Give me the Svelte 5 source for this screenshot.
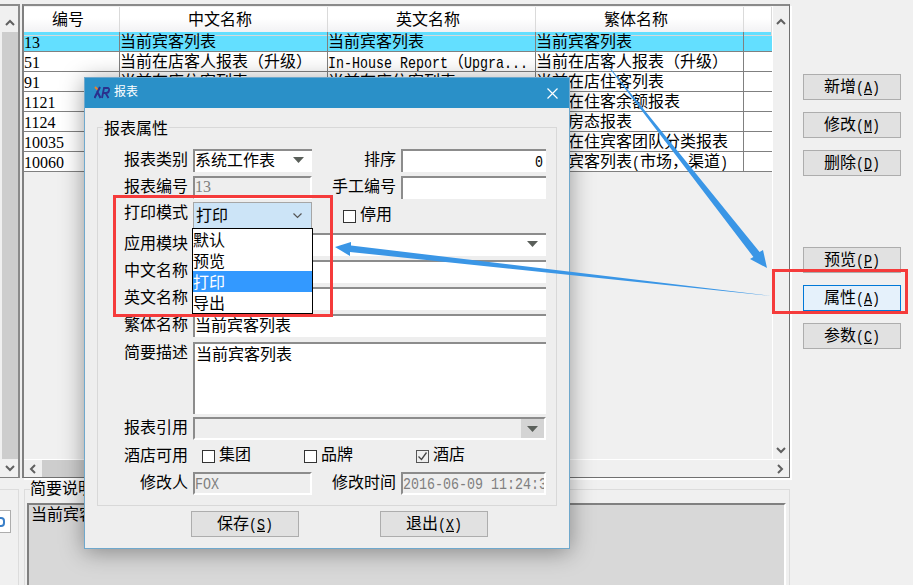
<script>
  const columns = ['编号', '中文名称', '英文名称', '繁体名称', ''];
  const rows = [
    ['13', '当前宾客列表', '当前宾客列表', '当前宾客列表'],
    ['51', '当前在店客人报表（升级）', 'In-House Report（Upgra...', '当前在店客人报表（升级）'],
    ['91', '当前在店住客列表', '当前在店住客列表', '当前在店住客列表'],
    ['1121', '当前在住客余额报表', '当前在住客余额报表', '当前在住客余额报表'],
    ['1124', '当前房态报表', '当前房态报表', '当前房态报表'],
    ['10035', '当前在住宾客团队分类报表', '当前在住宾客团队分类报表', '当前在住宾客团队分类报表'],
    ['10060', '当前宾客列表(市场，渠道)', '当前宾客列表(市场，渠道)', '当前宾客列表(市场，渠道)']
  ];
  const sideTop = [['新增', 'A'], ['修改', 'M'], ['删除', 'D']];
  const sideBottom = [['预览', 'P', false], ['属性', 'A', true], ['参数', 'C', false]];
  const printModes = ['默认', '预览', '打印', '导出'];

  // latin runs are narrower than the CJK size, like SimSun half-width
  const parts = text => text.match(/[\x20-\x7e]+|[^\x20-\x7e]+/g) || [];
  const isLatin = s => /^[\x20-\x7e]/.test(s);
</script>

{#snippet txt(text)}{#each parts(text) as s}{#if isLatin(s)}<span class="en">{s}</span>{:else}{s}{/if}{/each}{/snippet}

{#snippet chevron(d)}
  <svg class="chev" width="10" height="10" viewBox="0 0 10 10"><path {d} fill="none" stroke="#606060" stroke-width="2" /></svg>
{/snippet}

{#snippet tri()}
  <svg class="tri" width="11" height="6" viewBox="0 0 11 6"><path d="M0 0h11L5.500 6z" fill="#5a5f5a" /></svg>
{/snippet}

<div class="app">
  <div class="main">
    <div class="upper">
      <div class="scroll-left">
        <div class="arrow-btn">{@render chevron('M1 7l4-4 4 4')}</div>
        <div class="scroll-thumb"></div>
        <div class="arrow-btn">{@render chevron('M1 3l4 4 4-4')}</div>
      </div>
      <div class="list">
        <div class="list-body">
          <div class="table">
            <div class="head">
              {#each columns as c}<div class="th">{c}</div>{/each}
            </div>
            {#each rows as row, i}
              <div class="tr" class:selected={i === 0}>
                <div class="td num">{@render txt(row[0])}</div>
                <div class="td">{@render txt(row[1])}</div>
                <div class="td">{@render txt(row[2])}</div>
                <div class="td">{@render txt(row[3])}</div>
                <div class="td"></div>
              </div>
            {/each}
          </div>
          <div class="scroll-right">
            <div class="arrow-btn">{@render chevron('M1 7l4-4 4 4')}</div>
            <div class="arrow-btn">{@render chevron('M1 3l4 4 4-4')}</div>
          </div>
        </div>
        <div class="hscroll">
          <div class="arrow-btn side">{@render chevron('M7 1L3 5l4 4')}</div>
          <div class="hthumb"></div>
          <div class="arrow-btn side">{@render chevron('M3 1l4 4-4 4')}</div>
        </div>
      </div>
    </div>

    <div class="lower">
      <div class="lower-left">
        <div class="mini-field"><span class="mini-glyph"></span></div>
      </div>
      <div class="lower-group">
        <span class="legend-low">简要说明</span>
        <div class="memo">当前宾客列表</div>
      </div>
    </div>
  </div>

  <div class="side-buttons">
    <div class="side-group">
      {#each sideTop as b}
        <div class="btn">{b[0]}<span class="en">(<u>{b[1]}</u>)</span></div>
      {/each}
    </div>
    <div class="side-group">
      {#each sideBottom as b}
        <div class="btn" class:focused={b[2]}>{b[0]}<span class="en">(<u>{b[1]}</u>)</span></div>
      {/each}
    </div>
  </div>

  <div class="dialog">
    <div class="titlebar">
      <svg class="logo" width="16" height="14" viewBox="0 0 16 14">
        <path d="M1 1l3 3" stroke="#e8842c" stroke-width="2" fill="none" />
        <path d="M6 1L0.500 12M3 5l3.500 7" stroke="#2b2f8c" stroke-width="2" fill="none" />
        <path d="M8 12l2-10h3.500q2 0 1.500 2.500t-3 2.500H9.500M11.500 7l3 5" stroke="#2b2f8c" stroke-width="1.800" fill="none" />
      </svg>
      <span class="title">报表</span>
      <svg class="close" width="11" height="11" viewBox="0 0 11 11"><path d="M.5.500l10 10M10.500.500l-10 10" stroke="#fff" stroke-width="1.200" /></svg>
    </div>

    <div class="group">
      <span class="legend">报表属性</span>
      <div class="form">
        <div class="lbl">报表类别</div>
        <div class="field select">系统工作表{@render tri()}</div>
        <div class="lbl">排序</div>
        <div class="field right"><span class="en">0</span></div>

        <div class="lbl">报表编号</div>
        <div class="field off"><span class="en serif">13</span></div>
        <div class="lbl">手工编号</div>
        <div class="field"></div>

        <div class="lbl">打印模式</div>
        <div class="print-select">
          打印
          <svg class="print-chev" width="9" height="6" viewBox="0 0 9 6"><path d="M.5.500l4 4 4-4" fill="none" stroke="#555" stroke-width="1.200" /></svg>
          <div class="menu">
            {#each printModes as m, i}
              <div class="menu-item" class:active={i === 2}>{m}</div>
            {/each}
          </div>
        </div>
        <div class="span2 check-line"><span class="box"></span>停用</div>

        <div class="lbl">应用模块</div>
        <div class="field wide select">{@render tri()}</div>

        <div class="lbl">中文名称</div>
        <div class="field wide">当前宾客列表</div>

        <div class="lbl">英文名称</div>
        <div class="field wide">当前宾客列表</div>

        <div class="lbl">繁体名称</div>
        <div class="field wide">当前宾客列表</div>

        <div class="lbl">简要描述</div>
        <div class="field wide memo-field">当前宾客列表</div>

        <div class="lbl">报表引用</div>
        <div class="field wide off ref"><span class="ref-btn">{@render tri()}</span></div>

        <div class="lbl">酒店可用</div>
        <div class="checks">
          <div class="check-line"><span class="box"></span>集团</div>
          <div class="check-line"><span class="box"></span>品牌</div>
          <div class="check-line">
            <span class="box checked">
              <svg width="11" height="11" viewBox="0 0 11 11"><path d="M1.500 5.500l3 3 5-7" fill="none" stroke="#444" stroke-width="1.300" /></svg>
            </span>酒店
          </div>
        </div>

        <div class="lbl">修改人</div>
        <div class="field off"><span class="en">FOX</span></div>
        <div class="lbl">修改时间</div>
        <div class="field off"><span class="en">2016-06-09 11:24:3</span></div>
      </div>
    </div>

    <div class="actions">
      <div class="btn action">保存<span class="en">(<u>S</u>)</span></div>
      <div class="btn action">退出<span class="en">(<u>X</u>)</span></div>
    </div>
  </div>

  <!-- annotations drawn on top of the screenshot -->
  <svg class="marks" width="913" height="585" viewBox="0 0 913 585">
    <polygon points="594,48 759.600,252 763,250 767,268 750,259 753.400,257" fill="#3a96e6" />
    <polygon points="335,247 351,242 351,245.500 772,296 350,252 350,256" fill="#3a96e6" />
    <rect x="114.500" y="196.500" width="217" height="119" fill="none" stroke="#f53b3b" stroke-width="3" />
    <rect x="773.500" y="270.500" width="133" height="42" fill="none" stroke="#f53b3b" stroke-width="3" />
  </svg>
</div>

<style>
  :global(body) {
    background: #f0f0f0;
  }

  .app {
    --cjk: "Liberation Mono", "Noto Sans CJK SC", sans-serif;
    background: #f0f0f0;
    color: #000;
    display: flex;
    font-family: var(--cjk);
    font-size: 16px;
    height: 585px;
    line-height: 19px;
    overflow: hidden;
    position: relative;
    width: 913px;
  }

  .en {
    display: inline-block;
    font-size: 13.33px;
    transform: scaleY(1.2);
  }

  .en.serif,
  .num .en {
    font-family: "Liberation Serif", serif;
    font-size: 16px;
    transform: none;
  }

  .en.serif {
    transform: translateY(-2px);
  }

  .main {
    flex: none;
    padding-top: 4px;
    width: 792px;
  }

  .upper {
    column-gap: 2px;
    display: flex;
    height: 474px;
  }

  .scroll-left {
    border-bottom: 1px solid #808080;
    border-right: 2px solid #8a8a8a;
    border-top: 2px solid #8a8a8a;
    box-sizing: border-box;
    display: flex;
    flex-direction: column;
    padding: 1px 0 0 2px;
    width: 20px;
  }

  .arrow-btn {
    align-items: center;
    background: #f0f0f0;
    display: flex;
    flex: none;
    height: 18px;
    justify-content: center;
    width: 16px;
  }

  .arrow-btn.side {
    height: 100%;
    width: 18px;
  }

  .scroll-left .arrow-btn:first-child {
    margin-top: 7px;
  }

  .scroll-thumb {
    background: #cdcdcd;
    flex: 1;
  }

  .list {
    border-bottom: 1px solid #707070;
    border-left: 2px solid #808080;
    border-right: 1px solid #707070;
    border-top: 2px solid #8a8a8a;
    box-shadow: 2px 2px 0 #fff;
    box-sizing: border-box;
    display: flex;
    flex-direction: column;
    width: 768px;
  }

  .list-body {
    display: flex;
    flex: 1;
    min-height: 0;
    padding-top: 1px;
  }

  .table {
    width: 748px;
  }

  .head,
  .tr {
    display: grid;
    grid-template-columns: 96px 208px 208px 208px 28px;
  }

  .head {
    background: linear-gradient(#fff 0 45%, #f2f2f4);
    height: 25px;
  }

  .th {
    border-bottom: 1px solid #d8d8d8;
    border-right: 1px solid #dadada;
    box-sizing: border-box;
    line-height: 28px;
    padding-right: 7px;
    text-align: center;
  }

  .tr {
    background: #fff;
    height: 20px;
  }

  .tr.selected {
    background: #63dfff;
  }

  .td {
    border-bottom: 1px solid #808080;
    border-right: 1px solid #808080;
    box-sizing: border-box;
    line-height: 23px;
    overflow: hidden;
    white-space: nowrap;
  }

  .td.num {
    line-height: 21px;
  }

  .td:last-child {
    border-right: none;
  }

  .scroll-right {
    border-left: 1px solid #fff;
    display: flex;
    flex: 1;
    flex-direction: column;
    justify-content: space-between;
    margin-top: -1px;
  }

  .scroll-right .arrow-btn:first-child {
    margin-top: 7px;
  }

  .hscroll {
    border-top: 1px solid #fff;
    display: flex;
    flex: none;
    height: 17px;
    justify-content: space-between;
  }

  .hthumb {
    background: #cdcdcd;
    margin-right: auto;
    width: 360px;
  }

  .lower {
    column-gap: 5px;
    display: flex;
    height: 107px;
  }

  .lower-left {
    border-right: 1px solid #dcdcdc;
    border-top: 1px solid #dcdcdc;
    box-sizing: border-box;
    margin-top: 11px;
    padding-top: 20px;
    width: 19px;
  }

  .mini-field {
    align-items: center;
    background: #fff;
    border: 1px solid #adadad;
    border-left: none;
    box-sizing: border-box;
    display: flex;
    height: 23px;
    width: 11px;
  }

  .mini-glyph {
    border: 2px solid #3a7fc8;
    border-left: none;
    border-radius: 0 4px 4px 0;
    height: 6px;
    width: 3px;
  }

  .lower-group {
    border: 1px solid #dcdcdc;
    border-bottom: none;
    box-sizing: border-box;
    flex: 1;
    margin: 11px 2px 0 0;
    padding: 13px 3px 0 2px;
    position: relative;
  }

  .legend-low {
    background: #f0f0f0;
    left: 5px;
    padding-right: 2px;
    position: absolute;
    top: -9px;
  }

  .memo {
    background: #d8d8d8;
    border-left: 2px solid #808080;
    border-right: 2px solid #fff;
    border-top: 2px solid #808080;
    height: 100%;
    padding: 2px 2px;
  }

  .side-buttons {
    display: flex;
    flex-direction: column;
    margin-left: 11px;
    padding-top: 74px;
    row-gap: 71px;
  }

  .side-group {
    display: flex;
    flex-direction: column;
    row-gap: 12px;
  }

  .btn {
    background: #e1e1e1;
    border: 1px solid #adadad;
    box-sizing: border-box;
    height: 26px;
    line-height: 26px;
    text-align: center;
    width: 98px;
  }

  .btn.focused {
    background: #e5f1fb;
    border-color: #0078d7;
  }

  .dialog {
    background: #eeeeee;
    border: 1px solid #6fa8cc;
    box-shadow: 0 3px 22px rgba(0, 0, 0, 0.38);
    box-sizing: border-box;
    height: 472px;
    left: 84px;
    position: absolute;
    top: 77px;
    width: 486px;
  }

  .titlebar {
    align-items: center;
    background: #2a90c8;
    color: #fff;
    display: flex;
    height: 30px;
    padding: 0 11px 0 9px;
  }

  .logo {
    margin-right: 4px;
  }

  .title {
    flex: 1;
    font-size: 12px;
    line-height: 21px;
  }

  .group {
    border: 1px solid #d8d8d8;
    box-sizing: border-box;
    height: 379px;
    margin: 19px 0 0 12px;
    padding: 21px 0 0 9px;
    position: relative;
    width: 460px;
  }

  .legend {
    background: #eeeeee;
    left: 5px;
    padding: 0 1px;
    position: absolute;
    top: -7px;
  }

  .form {
    column-gap: 4px;
    display: grid;
    grid-template-columns: 82px 119px 81px 145px;
    grid-template-rows: 27px 26px 31px 27px 27px 27px 28px 75px 28px 27px 22px;
  }

  .lbl {
    line-height: 24px;
    padding-right: 1px;
    text-align: right;
    white-space: nowrap;
  }

  .field {
    background: #fff;
    border-left: 2px solid #8c8c8c;
    border-top: 2px solid #8c8c8c;
    box-sizing: border-box;
    height: 23px;
    line-height: 23px;
    overflow: hidden;
    position: relative;
    white-space: nowrap;
  }

  .field.right {
    padding-right: 3px;
    text-align: right;
  }

  .field.off {
    background: #eeeeee;
    border-bottom: 2px solid #fff;
    border-right: 2px solid #fff;
    color: #808080;
    line-height: 21px;
  }

  .field.wide {
    grid-column: 2 / 5;
  }

  .memo-field {
    height: 72px;
    padding: 1px 0 0 1px;
  }

  .tri {
    position: absolute;
    right: 8px;
    top: 6px;
  }

  .ref-btn {
    background: #d4d4d4;
    bottom: 0;
    position: absolute;
    right: 0;
    top: 0;
    width: 23px;
  }

  .ref-btn .tri {
    right: 6px;
    top: 7px;
  }

  .print-select {
    background: #cce4f7;
    border: 1px solid #a6a6a6;
    box-sizing: border-box;
    height: 27px;
    line-height: 28px;
    padding-left: 2px;
    position: relative;
  }

  .print-chev {
    position: absolute;
    right: 9px;
    top: 10px;
  }

  .menu {
    background: #fff;
    border: 1px solid #000;
    left: -2px;
    line-height: 26px;
    position: absolute;
    top: 25px;
    width: 119px;
    z-index: 2;
  }

  .menu-item {
    height: 21px;
    overflow: hidden;
  }

  .menu-item.active {
    background: #3399ff;
    color: #fff;
  }

  .span2 {
    grid-column: 3 / 5;
    padding: 3px 0 0 27px;
  }

  .check-line {
    align-items: center;
    column-gap: 4px;
    display: flex;
    height: 22px;
  }

  .box {
    background: #fff;
    border: 1px solid #333;
    box-sizing: border-box;
    flex: none;
    height: 13px;
    width: 13px;
  }

  .box.checked {
    align-items: center;
    background: #eeeeee;
    border-color: #555;
    display: flex;
    justify-content: center;
  }

  .checks {
    display: grid;
    grid-column: 2 / 5;
    grid-template-columns: 102px 112px 1fr;
    padding: 0 0 0 9px;
  }

  .actions {
    column-gap: 81px;
    display: flex;
    margin: 5px 0 0 106px;
  }

  .action {
    width: 108px;
  }

  .marks {
    left: 0;
    pointer-events: none;
    position: absolute;
    top: 0;
    z-index: 5;
  }
</style>
